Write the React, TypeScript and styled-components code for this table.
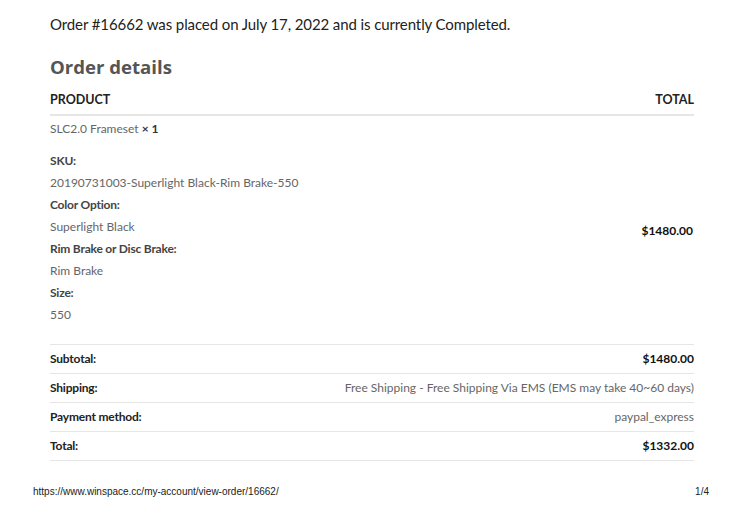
import * as React from 'react';
import styled, { createGlobalStyle } from 'styled-components';

const GlobalStyle = createGlobalStyle`
    html, body {
        margin: 0;
        padding: 0;
        background: #fff;
    }
    body {
        font-family: Lato, "Open Sans", sans-serif;
        -webkit-font-smoothing: antialiased;
    }
`;

const Page = styled.div`
    width: 744px;
    height: 517px;
    box-sizing: border-box;
    display: flex;
    flex-direction: column;
`;

const Content = styled.div`
    padding: 12px 50px 0 50px;
`;

const Notice = styled.p`
    margin: 0;
    font-size: 15px;
    line-height: 24px;
    color: #222;
    letter-spacing: -0.1px;
`;

const Heading = styled.h2`
    margin: 17px 0 0;
    font-family: "Open Sans", Lato, sans-serif;
    font-weight: 700;
    font-size: 18.6px;
    line-height: 28px;
    color: #555;
`;

const Table = styled.table`
    width: 100%;
    margin-top: 2px;
    border-collapse: collapse;
    font-size: 12px;
`;

const HeadCell = styled.th<{ align?: 'left' | 'right' }>`
    padding: 9px 0 6px;
    line-height: 16px;
    font-size: 12.5px;
    font-weight: 700;
    text-transform: uppercase;
    color: #222;
    text-align: ${(props) => props.align || 'left'};
    border-bottom: 2px solid #e6e6e6;
`;

const ItemCell = styled.td`
    padding: 3px 0 18px;
    vertical-align: top;
    color: #666;
    border-bottom: 1px solid #e6e6e6;
`;

const ItemName = styled.div`
    line-height: 20px;
`;

const Qty = styled.strong`
    color: #333;
    font-weight: 700;
`;

const MetaList = styled.dl`
    margin: 11px 0 0;
    line-height: 22px;
`;

const MetaKey = styled.dt`
    font-weight: 700;
    color: #444;
    letter-spacing: -0.2px;
`;

const MetaValue = styled.dd`
    margin: 0;
    color: #666;
`;

const PriceCell = styled.td`
    text-align: right;
    vertical-align: middle;
    font-weight: 700;
    color: #111;
    border-bottom: 1px solid #e6e6e6;
`;

const FootRow = styled.tr`
    height: 29px;
`;

const FootLabel = styled.th`
    text-align: left;
    font-weight: 700;
    color: #222;
    letter-spacing: -0.2px;
    padding: 0 0 2px;
    border-bottom: 1px solid #e6e6e6;
`;

const FootValue = styled.td<{ bold?: boolean }>`
    text-align: right;
    padding: 0 0 2px;
    font-weight: ${(props) => (props.bold ? 700 : 400)};
    color: ${(props) => (props.bold ? '#111' : '#666')};
    border-bottom: 1px solid #e6e6e6;
`;

const PrintFooter = styled.div`
    margin-top: auto;
    margin-bottom: 19px;
    padding: 0 35px 0 33px;
    display: flex;
    justify-content: space-between;
    font-family: "Liberation Sans", Arial, sans-serif;
    font-size: 10px;
    line-height: 12px;
    color: #222;
`;

const meta = [
    ['SKU:', '20190731003-Superlight Black-Rim Brake-550'],
    ['Color Option:', 'Superlight Black'],
    ['Rim Brake or Disc Brake:', 'Rim Brake'],
    ['Size:', '550'],
];

const totals: { label: string; value: string; bold?: boolean }[] = [
    { label: 'Subtotal:', value: '$1480.00', bold: true },
    { label: 'Shipping:', value: 'Free Shipping - Free Shipping Via EMS (EMS may take 40~60 days)' },
    { label: 'Payment method:', value: 'paypal_express' },
    { label: 'Total:', value: '$1332.00', bold: true },
];

export default function App() {
    return (
        <Page>
            <GlobalStyle />
            <Content>
                <Notice>
                    Order #16662 was placed on July 17, 2022 and is currently Completed.
                </Notice>
                <Heading>Order details</Heading>
                <Table>
                    <thead>
                        <tr>
                            <HeadCell>Product</HeadCell>
                            <HeadCell align="right">Total</HeadCell>
                        </tr>
                    </thead>
                    <tbody>
                        <tr>
                            <ItemCell>
                                <ItemName>
                                    SLC2.0 Frameset <Qty>× 1</Qty>
                                </ItemName>
                                <MetaList>
                                    {meta.map(([key, value]) => (
                                        <React.Fragment key={key}>
                                            <MetaKey>{key}</MetaKey>
                                            <MetaValue>{value}</MetaValue>
                                        </React.Fragment>
                                    ))}
                                </MetaList>
                            </ItemCell>
                            <PriceCell>$1480.00</PriceCell>
                        </tr>
                    </tbody>
                    <tfoot>
                        {totals.map((row) => (
                            <FootRow key={row.label}>
                                <FootLabel>{row.label}</FootLabel>
                                <FootValue bold={row.bold}>{row.value}</FootValue>
                            </FootRow>
                        ))}
                    </tfoot>
                </Table>
            </Content>
            <PrintFooter>
                <span>https://www.winspace.cc/my-account/view-order/16662/</span>
                <span>1/4</span>
            </PrintFooter>
        </Page>
    );
}
